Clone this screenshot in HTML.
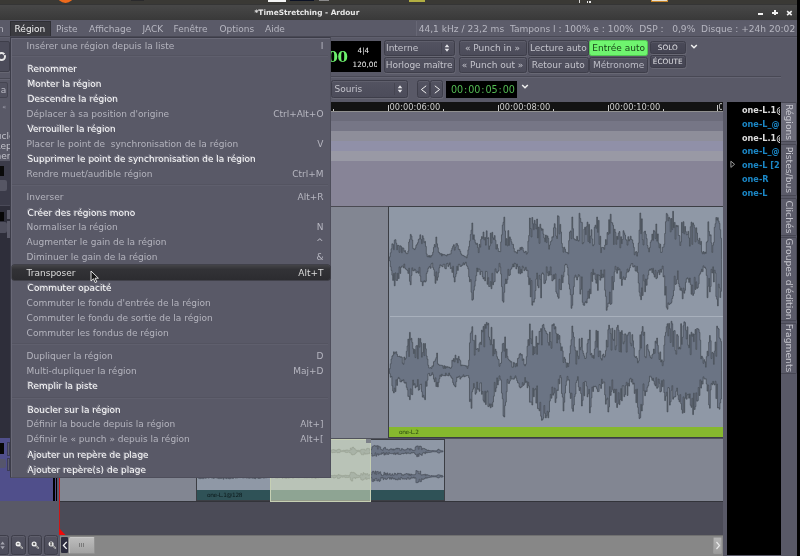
<!DOCTYPE html>
<html><head><meta charset="utf-8"><title>*TimeStretching - Ardour</title>
<style>
*{box-sizing:border-box;margin:0;padding:0}
html,body{width:800px;height:556px;overflow:hidden;background:#595967}
body{position:relative;font-family:"DejaVu Sans","Liberation Sans",sans-serif;font-size:9px;color:#c8c8d0}
.a{position:absolute;white-space:pre}
.btn{position:absolute;border:1px solid #3e3e4a;border-radius:2.5px;background:linear-gradient(#535361,#4c4c5a);color:#c4c4cc;text-align:center;font-size:9px;line-height:13px;box-shadow:inset 0 1px 0 rgba(255,255,255,.07),0.5px 1px 0 rgba(255,255,255,.09);white-space:pre}
.btn.r1{top:40.2px;height:16.3px;line-height:14px}
.btn.r2{top:57px;height:15.5px;line-height:14.5px}
.btn.sm{font-size:7.3px;line-height:11.5px;background:linear-gradient(#4a4a58,#444452);color:#e2e2e6}
.mi{position:absolute;left:26.6px;font-size:9px;line-height:16px;height:16px;white-space:pre;color:#b4b4be}
.mi.d{color:#fff;text-shadow:-1px -1px 0 #858592;margin:0 0 0 1px}
.mi.h,.ac.h{color:#dcdcdc}
.hl{background:linear-gradient(#444448,#323236 30%,#2c2c30);border-radius:2px;box-shadow:0 0 0 0.5px #2a2a2e}
.ac{position:absolute;right:476.5px;font-size:9px;line-height:16px;height:16px;white-space:pre;color:#b6b6c0;text-align:right}
.sep{position:absolute;left:12px;width:316px;height:2px;border-top:1px solid #545461;border-bottom:1px solid #5f5f6d}
.li{position:absolute;left:742px;font-weight:bold;font-size:8.15px;line-height:10px;white-space:pre;color:#1b87c6}
.li.w{color:#dedede}
.tab{position:absolute;left:781px;width:16px;border:1px solid #484854;border-left:none;background:#5b5b69;border-radius:0 2px 2px 0}
.tab span{position:absolute;left:7.6px;top:50%;white-space:pre;font-size:9.2px;line-height:10px;color:#c6c6ce;transform:translate(-50%,-50%) rotate(90deg)}
</style></head><body>
<div id="root" style="position:absolute;left:0;top:0;width:800px;height:556px;will-change:transform">

<!-- desktop panel + title bar -->
<div class="a" style="left:0;top:0;width:800px;height:4px;background:#3a3935"></div>
<div class="a" style="left:57.3px;top:-13.6px;width:17px;height:17px;border-radius:8.5px;background:#ee6a1c"></div>
<div class="a" style="left:131px;top:0;width:13px;height:1px;background:#2a2a2c"></div>
<div class="a" style="left:268px;top:0;width:18px;height:2px;background:#f4f4f4"></div>
<div class="a" style="left:290px;top:0;width:24px;height:1px;background:#0c1224"></div>
<div class="a" style="left:319px;top:0;width:10px;height:1px;background:#8a8a8a"></div>
<div class="a" style="left:409px;top:0;width:16px;height:2px;background:#b2ae42"></div>
<div class="a" style="left:578.5px;top:0;width:1.5px;height:2.5px;background:#d8d8d8"></div>
<div class="a" style="left:586.5px;top:0.5px;width:1.3px;height:2.5px;background:#e8e8e8"></div>
<div class="a" style="left:589.3px;top:0.5px;width:1.3px;height:2.5px;background:#e8e8e8"></div>
<div class="a" style="left:651px;top:0;width:17px;height:2px;background:#e8e0d0;border:1px solid #c8862a;border-top:none"></div>
<div class="a" style="left:0;top:3.5px;width:800px;height:16.5px;background:linear-gradient(#2c2c2c 0,#474747 1.5px,#3a3a3a 15px,#383838)"></div>
<div class="a" style="left:254.5px;top:8px;font-weight:bold;font-size:7.4px;line-height:10px;color:#e6e6e6">*TimeStretching - Ardour</div>
<div class="a" style="left:758px;top:12.8px;width:5.2px;height:1.8px;background:#f2f2f2"></div>
<div class="a" style="left:772.4px;top:11.9px;width:5.2px;height:1.8px;background:#f2f2f2"></div>
<div class="a" style="left:774.1px;top:10.3px;width:1.8px;height:5px;background:#f2f2f2"></div>
<svg class="a" style="left:786px;top:9.5px" width="7" height="7" viewBox="0 0 7 7"><path d="M1.1,1.1 L5.7,5.2 M5.7,1.1 L1.1,5.2" stroke="#f2f2f2" stroke-width="1.6" fill="none"/></svg>

<!-- menubar -->
<div class="a" style="left:0;top:19.8px;width:800px;height:17.2px;background:#5a5a68"></div>
<div class="a" style="left:10px;top:21px;width:41px;height:16px;background:#3b3b40;border:1px solid #2f2f34;border-bottom:none"></div>
<div class="a" style="left:-2px;top:24px;font-size:9px;line-height:11px;color:#b6b6c0">n</div>
<div class="a" style="left:14.5px;top:24px;font-size:9px;line-height:11px;color:#f0f0f0">Région</div>
<div class="a" style="left:56px;top:24px;font-size:9px;line-height:11px;color:#b6b6c0">Piste</div>
<div class="a" style="left:89px;top:24px;font-size:9px;line-height:11px;color:#b6b6c0">Affichage</div>
<div class="a" style="left:142.5px;top:24px;font-size:9px;line-height:11px;color:#b6b6c0">JACK</div>
<div class="a" style="left:173.5px;top:24px;font-size:9px;line-height:11px;color:#b6b6c0">Fenêtre</div>
<div class="a" style="left:219.5px;top:24px;font-size:9px;line-height:11px;color:#b6b6c0">Options</div>
<div class="a" style="left:265px;top:24px;font-size:9px;line-height:11px;color:#b6b6c0">Aide</div>
<div class="a" style="left:415.6px;top:20.5px;width:385px;height:15.3px;background:#5c5c6a;border-left:1px solid #676775"></div>
<div class="a" style="left:418.7px;top:24px;font-size:9.08px;line-height:11px;color:#b6b6c0">44,1 kHz / 23,2 ms  Tampons l : 100% e : 100%  DSP :   0,9%  Disque : +24h 20:02</div>

<!-- toolbar row 1 -->
<div class="a" style="left:0;top:35.8px;width:800px;height:1px;background:#484854"></div>
<div class="a" style="left:0;top:36.8px;width:800px;height:1px;background:#5f5f6d"></div>
<div class="a" style="left:331px;top:41.4px;width:50px;height:30.4px;background:#000"></div>
<div class="a" style="left:327.5px;top:49px;font-family:'DejaVu Serif','Liberation Serif',serif;font-weight:bold;font-size:15px;line-height:16px;color:#6cf06c;letter-spacing:-0.5px">00</div>
<div class="a" style="left:357.5px;top:45.5px;font-size:7.3px;line-height:9px;color:#f0f0f0">4|4</div>
<div class="a" style="left:352.5px;top:59.5px;font-size:7.3px;line-height:9px;color:#f0f0f0;width:24.5px;overflow:hidden">120,00</div>
<div class="btn r1" style="left:383.6px;width:71px;text-align:left;padding-left:1.4px">Interne</div>
<div class="a" style="left:441px;top:43px;width:1px;height:11px;background:#454551"></div>
<svg class="a" style="left:444.2px;top:43.7px" width="6" height="8" viewBox="0 0 6 8"><path d="M3,0.3 L5.3,3.2 L0.7,3.2 Z M3,7.7 L5.3,4.8 L0.7,4.8 Z" fill="#e4e4e8"/></svg>
<div class="btn r2" style="left:383.6px;width:71px;letter-spacing:-0.05px">Horloge maître</div>
<div class="btn r1" style="left:458.5px;width:68px">« Punch in »</div>
<div class="btn r2" style="left:458.5px;width:68px">« Punch out »</div>
<div class="btn r1" style="left:527.8px;width:61px">Lecture auto</div>
<div class="btn r2" style="left:527.8px;width:61px">Retour auto</div>
<div class="btn r1" style="left:589.4px;width:58.5px;background:#6ff56f;border-color:#52c652;color:#1a461a;box-shadow:none">Entrée auto</div>
<div class="btn r2" style="left:589.4px;width:58.5px;color:#bcbcc6">Métronome</div>
<div class="btn sm" style="left:650px;top:40.5px;width:35.5px;height:13.5px">SOLO</div>
<div class="btn sm" style="left:650px;top:54.8px;width:35.5px;height:13.5px">ÉCOUTE</div>
<svg class="a" style="left:690px;top:43.5px" width="8" height="6" viewBox="0 0 8 6"><path d="M1.2,1 L4,3.8 L6.8,1" stroke="#f0f0f0" stroke-width="1.5" fill="none"/></svg>
<div class="a" style="left:331px;top:76px;width:466px;height:2px;border-top:1px solid #484854;border-bottom:1px solid #646472"></div>

<!-- toolbar row 2 -->
<div class="btn" style="left:331px;top:80px;width:77px;height:18px;text-align:left;padding-left:2.5px;line-height:16px">Souris</div>
<div class="a" style="left:394px;top:83px;width:1px;height:12px;background:#454551"></div>
<svg class="a" style="left:397px;top:84.8px" width="6" height="8" viewBox="0 0 6 8"><path d="M3,0.3 L5.3,3.2 L0.7,3.2 Z M3,7.7 L5.3,4.8 L0.7,4.8 Z" fill="#e4e4e8"/></svg>
<div class="btn" style="left:416.8px;top:80px;width:13px;height:18px"></div>
<div class="btn" style="left:430.4px;top:80px;width:13px;height:18px"></div>
<svg class="a" style="left:419.5px;top:84.5px" width="8" height="9" viewBox="0 0 8 9"><path d="M6.2,0.8 L1.4,4.5 L6.2,8.2" stroke="#f0f0f0" stroke-width="1" fill="none"/></svg>
<svg class="a" style="left:433px;top:84.5px" width="8" height="9" viewBox="0 0 8 9"><path d="M1.8,0.8 L6.6,4.5 L1.8,8.2" stroke="#f0f0f0" stroke-width="1" fill="none"/></svg>
<div class="a" style="left:445.5px;top:81px;width:71px;height:16.5px;background:#000"></div>
<div class="a" style="left:451px;top:83.5px;font-size:9.6px;line-height:12px;color:#54bc54">00<span style="margin:0 0.9px">:</span>00<span style="margin:0 0.9px">:</span>05<span style="margin:0 0.9px">:</span>00</div>
<svg class="a" style="left:520.8px;top:83.7px" width="8" height="6" viewBox="0 0 8 6"><path d="M1.2,1 L4,3.8 L6.8,1" stroke="#f0f0f0" stroke-width="1.5" fill="none"/></svg>

<!-- left strip (mostly hidden) -->
<div class="a" style="left:-3px;top:41px;width:13.4px;height:31px;background:#4c4c5a;border:1px solid #3e3e4a;border-radius:2px;box-shadow:0.5px 1px 0 rgba(255,255,255,.08)"></div>
<div class="a" style="left:-3.4px;top:51.6px;width:9.2px;height:9.2px;border:2px solid #e6e6e6;border-radius:50%"></div>
<div class="a" style="left:4px;top:54.2px;width:2px;height:1px;background:#4c4c5a;transform:rotate(-20deg)"></div>
<div class="a" style="left:0;top:77.5px;width:10px;height:2px;border-top:1px solid #484854;border-bottom:1px solid #646472"></div>
<div class="a" style="left:-2px;top:82px;width:10px;height:15.5px;background:#525260;border:1px solid #454551;border-radius:2px"></div>
<div class="a" style="left:0.8px;top:83.5px;font-size:9px;line-height:12px;color:#bcbcc6">a</div>
<div class="a" style="left:2.3px;top:102.5px;font-size:6.5px;line-height:9px;color:#a8a8b4">«</div>

<!-- ruler -->
<div class="a" style="left:60px;top:102px;width:662.6px;height:9.5px;background:#131313"></div>
<div class="a" style="left:60px;top:110.5px;width:662.6px;height:1px;background:#909090"></div>
<div class="a" style="left:389.6px;top:103px;font-size:8.3px;line-height:9px;color:#cccccc">00:00:06:00</div>
<div class="a" style="left:499.6px;top:103px;font-size:8.3px;line-height:9px;color:#cccccc">00:00:08:00</div>
<div class="a" style="left:609.6px;top:103px;font-size:8.3px;line-height:9px;color:#cccccc">00:00:10:00</div>
<div class="a" style="left:718.5px;top:103px;font-size:8px;line-height:9px;color:#cccccc;width:3.5px;overflow:hidden">00</div>
<div class="a" style="left:387.8px;top:104.5px;width:1px;height:6px;background:#c8c8c8"></div>
<div class="a" style="left:497.8px;top:104.5px;width:1px;height:6px;background:#c8c8c8"></div>
<div class="a" style="left:607.8px;top:104.5px;width:1px;height:6px;background:#c8c8c8"></div>
<div class="a" style="left:717px;top:104.5px;width:1px;height:6px;background:#c8c8c8"></div>
<div class="a" style="left:332.8px;top:109px;width:1px;height:1.5px;background:#c8c8c8"></div>
<div class="a" style="left:442.8px;top:109px;width:1px;height:1.5px;background:#c8c8c8"></div>
<div class="a" style="left:552.8px;top:109px;width:1px;height:1.5px;background:#c8c8c8"></div>
<div class="a" style="left:662.8px;top:109px;width:1px;height:1.5px;background:#c8c8c8"></div>

<!-- ruler bands -->
<div class="a" style="left:60px;top:111.5px;width:662.6px;height:9.5px;background:#6b6b7a"></div>
<div class="a" style="left:60px;top:121px;width:662.6px;height:10px;background:#767686"></div>
<div class="a" style="left:60px;top:131px;width:662.6px;height:10px;background:#8e8e9a"></div>
<div class="a" style="left:60px;top:141px;width:662.6px;height:10px;background:#9090a8"></div>
<div class="a" style="left:60px;top:151px;width:662.6px;height:10px;background:#9999a5"></div>
<div class="a" style="left:60px;top:161px;width:662.6px;height:45px;background:#878497"></div>

<!-- track 1 -->
<div class="a" style="left:60px;top:205.5px;width:662.6px;height:233px;background:#828692;border-top:1px solid #4a4a52"></div>
<div class="a" style="left:388px;top:205.5px;width:334.6px;height:232.5px;background:#8f98a6;border:1px solid #3c3e44;border-right:none"></div>
<div class="a" style="left:389.5px;top:316px;width:333px;height:1px;background:#a8b0bc"></div>
<svg class="a" style="left:0;top:0" width="800" height="556" viewBox="0 0 800 556">
<path d="M389.5,259.6V256.8h0.8V252.8h0.8V248.8h0.8V243.8h0.8V244.4h0.8V249.7h0.8V240.2h0.8V239.7h0.8V243.2h0.8V249.8h0.8V245.2h0.8V245.5h0.8V252.4h0.8V245.8h0.8V246.4h0.8V252.8h0.8V247.8h0.8V248.2h0.8V251.4h0.8V250.6h0.8V252.7h0.8V253.6h0.8V253.6h0.8V251.0h0.8V242.0h0.8V239.4h0.8V234.4h0.8V236.0h0.8V240.0h0.8V248.4h0.8V248.9h0.8V249.6h0.8V248.0h0.8V245.4h0.8V244.3h0.8V242.7h0.8V239.5h0.8V238.7h0.8V234.8h0.8V239.2h0.8V243.6h0.8V235.7h0.8V238.3h0.8V242.7h0.8V241.4h0.8V246.4h0.8V253.9h0.8V256.7h0.8V255.7h0.8V257.1h0.8V255.5h0.8V257.2h0.8V255.6h0.8V254.9h0.8V252.3h0.8V247.4h0.8V244.5h0.8V246.9h0.8V237.0h0.8V243.8h0.8V247.7h0.8V252.1h0.8V252.8h0.8V254.2h0.8V253.5h0.8V256.0h0.8V254.0h0.8V254.8h0.8V254.6h0.8V255.1h0.8V255.2h0.8V256.0h0.8V254.4h0.8V254.7h0.8V254.3h0.8V254.0h0.8V253.9h0.8V250.4h0.8V248.2h0.8V246.3h0.8V244.7h0.8V250.1h0.8V247.2h0.8V243.6h0.8V243.7h0.8V245.5h0.8V249.4h0.8V249.3h0.8V251.3h0.8V253.8h0.8V254.9h0.8V255.3h0.8V255.6h0.8V256.1h0.8V256.7h0.8V256.7h0.8V257.9h0.8V254.9h0.8V249.9h0.8V246.6h0.8V240.9h0.8V234.6h0.8V230.2h0.8V223.0h0.8V239.4h0.8V234.8h0.8V239.8h0.8V242.7h0.8V244.3h0.8V243.3h0.8V247.5h0.8V252.6h0.8V244.3h0.8V247.1h0.8V239.4h0.8V236.6h0.8V238.4h0.8V232.0h0.8V239.9h0.8V237.4h0.8V245.1h0.8V230.8h0.8V238.5h0.8V237.7h0.8V249.4h0.8V245.9h0.8V233.1h0.8V243.2h0.8V232.3h0.8V237.8h0.8V239.5h0.8V235.6h0.8V240.2h0.8V249.1h0.8V244.5h0.8V248.4h0.8V251.3h0.8V251.5h0.8V251.7h0.8V241.9h0.8V234.8h0.8V225.1h0.8V222.3h0.8V217.1h0.8V230.9h0.8V245.1h0.8V238.6h0.8V245.9h0.8V230.6h0.8V245.4h0.8V236.9h0.8V239.0h0.8V241.8h0.8V244.3h0.8V244.3h0.8V248.4h0.8V251.9h0.8V251.7h0.8V252.3h0.8V253.4h0.8V250.0h0.8V250.2h0.8V250.6h0.8V247.6h0.8V249.6h0.8V247.1h0.8V247.9h0.8V250.8h0.8V252.6h0.8V252.1h0.8V251.2h0.8V254.1h0.8V252.8h0.8V241.2h0.8V235.5h0.8V218.0h0.8V228.5h0.8V237.0h0.8V217.5h0.8V223.7h0.8V229.7h0.8V220.3h0.8V224.2h0.8V229.0h0.8V219.0h0.8V237.9h0.8V227.1h0.8V243.4h0.8V224.2h0.8V228.1h0.8V230.4h0.8V228.9h0.8V234.1h0.8V238.0h0.8V241.7h0.8V235.0h0.8V242.6h0.8V235.9h0.8V238.3h0.8V249.2h0.8V245.0h0.8V241.7h0.8V240.8h0.8V236.8h0.8V237.1h0.8V227.8h0.8V223.7h0.8V227.9h0.8V236.0h0.8V238.5h0.8V215.7h0.8V216.5h0.8V233.9h0.8V224.4h0.8V232.0h0.8V243.4h0.8V247.3h0.8V252.2h0.8V247.2h0.8V249.2h0.8V252.2h0.8V252.4h0.8V252.6h0.8V253.9h0.8V240.6h0.8V232.1h0.8V230.9h0.8V238.7h0.8V217.0h0.8V228.7h0.8V238.5h0.8V239.7h0.8V239.6h0.8V240.5h0.8V236.3h0.8V240.3h0.8V241.1h0.8V213.2h0.8V218.4h0.8V222.3h0.8V222.4h0.8V243.8h0.8V242.6h0.8V229.1h0.8V227.2h0.8V234.6h0.8V226.7h0.8V222.1h0.8V241.5h0.8V224.4h0.8V243.0h0.8V236.0h0.8V229.7h0.8V238.9h0.8V245.8h0.8V244.7h0.8V227.2h0.8V225.2h0.8V228.3h0.8V217.0h0.8V232.3h0.8V220.4h0.8V244.4h0.8V236.2h0.8V252.6h0.8V247.4h0.8V247.5h0.8V247.6h0.8V249.3h0.8V245.1h0.8V239.6h0.8V244.6h0.8V232.5h0.8V234.4h0.8V219.7h0.8V233.4h0.8V214.2h0.8V222.6h0.8V222.8h0.8V225.2h0.8V244.5h0.8V229.2h0.8V232.4h0.8V244.3h0.8V236.3h0.8V239.4h0.8V233.2h0.8V231.5h0.8V247.8h0.8V236.7h0.8V243.6h0.8V239.5h0.8V230.7h0.8V232.9h0.8V235.0h0.8V239.4h0.8V240.3h0.8V245.1h0.8V236.7h0.8V241.0h0.8V239.5h0.8V236.2h0.8V239.5h0.8V239.9h0.8V243.2h0.8V247.3h0.8V254.8h0.8V252.1h0.8V251.6h0.8V256.1h0.8V252.4h0.8V243.1h0.8V230.1h0.8V213.0h0.8V233.6h0.8V218.8h0.8V239.6h0.8V245.0h0.8V231.8h0.8V231.1h0.8V234.2h0.8V238.6h0.8V245.5h0.8V248.3h0.8V251.9h0.8V247.6h0.8V242.1h0.8V240.2h0.8V234.1h0.8V240.3h0.8V230.4h0.8V231.6h0.8V238.6h0.8V224.0h0.8V241.1h0.8V233.9h0.8V243.0h0.8V247.8h0.8V244.2h0.8V252.5h0.8V252.1h0.8V247.2h0.8V247.2h0.8V244.1h0.8V233.5h0.8V221.7h0.8V213.4h0.8V214.8h0.8V220.8h0.8V217.3h0.8V218.5h0.8V231.9h0.8V218.5h0.8V229.6h0.8V211.3h0.8V227.6h0.8V222.4h0.8V239.2h0.8V225.3h0.8V226.6h0.8V225.6h0.8V235.4h0.8V235.6h0.8V245.5h0.8V241.8h0.8V222.4h0.8V232.6h0.8V221.7h0.8V233.8h0.8V226.5h0.8V231.6h0.8V234.8h0.8V234.4h0.8V231.4h0.8V237.9h0.8V246.1h0.8V226.7h0.8V222.1h0.8V244.4h0.8V222.9h0.8V224.9h0.8V227.7h0.8V241.9h0.8V227.8h0.8V233.0h0.8V240.0h0.8V243.4h0.8V238.2h0.8V244.4h0.8V241.4h0.8V251.9h0.8V253.8h0.8V251.5h0.8V253.9h0.8V252.0h0.8V253.4h0.8V242.3h0.8V241.1h0.8V221.8h0.8V231.5h0.8V235.7h0.8V234.8h0.8V242.9h0.8V252.4h0.8V245.1h0.8V242.4h0.8V227.3h0.8V223.7h0.8V217.5h0.8V220.1h0.8V217.7h0.8V221.1h0.8V223.3h0.8V229.7h0.8V238.2h0.8V259.6V291.3h-0.8V297.5h-0.8V287.8h-0.8V284.1h-0.8V305.9h-0.8V299.2h-0.8V296.6h-0.8V273.0h-0.8V270.2h-0.8V282.0h-0.8V266.8h-0.8V273.0h-0.8V269.3h-0.8V286.5h-0.8V291.9h-0.8V278.4h-0.8V286.3h-0.8V297.7h-0.8V275.4h-0.8V268.8h-0.8V267.2h-0.8V267.6h-0.8V265.8h-0.8V271.6h-0.8V269.2h-0.8V271.7h-0.8V273.4h-0.8V275.0h-0.8V283.8h-0.8V287.6h-0.8V288.4h-0.8V281.9h-0.8V289.5h-0.8V277.3h-0.8V293.6h-0.8V295.4h-0.8V285.0h-0.8V294.2h-0.8V284.4h-0.8V278.0h-0.8V282.4h-0.8V279.2h-0.8V277.8h-0.8V278.8h-0.8V282.4h-0.8V290.3h-0.8V293.2h-0.8V288.1h-0.8V298.8h-0.8V290.7h-0.8V288.1h-0.8V290.2h-0.8V286.5h-0.8V283.6h-0.8V270.8h-0.8V279.5h-0.8V283.8h-0.8V284.4h-0.8V276.1h-0.8V290.5h-0.8V296.0h-0.8V298.5h-0.8V302.4h-0.8V303.6h-0.8V304.0h-0.8V304.6h-0.8V302.8h-0.8V309.2h-0.8V307.3h-0.8V286.5h-0.8V295.2h-0.8V275.8h-0.8V276.9h-0.8V266.0h-0.8V269.2h-0.8V272.3h-0.8V269.4h-0.8V274.6h-0.8V270.5h-0.8V272.5h-0.8V277.8h-0.8V278.7h-0.8V270.3h-0.8V277.1h-0.8V274.2h-0.8V268.3h-0.8V272.7h-0.8V268.6h-0.8V270.2h-0.8V269.2h-0.8V270.5h-0.8V275.0h-0.8V279.1h-0.8V285.3h-0.8V279.0h-0.8V291.8h-0.8V281.1h-0.8V274.8h-0.8V295.5h-0.8V287.8h-0.8V299.7h-0.8V296.2h-0.8V292.2h-0.8V283.0h-0.8V272.5h-0.8V266.4h-0.8V271.2h-0.8V270.8h-0.8V265.6h-0.8V267.0h-0.8V266.9h-0.8V263.5h-0.8V263.7h-0.8V265.4h-0.8V267.9h-0.8V270.6h-0.8V272.0h-0.8V269.0h-0.8V272.8h-0.8V277.5h-0.8V279.6h-0.8V279.1h-0.8V276.8h-0.8V279.5h-0.8V285.4h-0.8V271.7h-0.8V278.7h-0.8V268.9h-0.8V270.1h-0.8V267.4h-0.8V273.3h-0.8V269.9h-0.8V266.3h-0.8V271.8h-0.8V281.8h-0.8V289.8h-0.8V276.5h-0.8V303.6h-0.8V304.4h-0.8V292.0h-0.8V303.5h-0.8V303.0h-0.8V307.0h-0.8V310.3h-0.8V296.4h-0.8V290.2h-0.8V269.8h-0.8V277.2h-0.8V274.1h-0.8V278.0h-0.8V270.0h-0.8V280.2h-0.8V275.5h-0.8V274.9h-0.8V290.4h-0.8V274.5h-0.8V283.2h-0.8V279.4h-0.8V273.1h-0.8V274.7h-0.8V269.3h-0.8V281.4h-0.8V272.6h-0.8V293.8h-0.8V289.1h-0.8V298.3h-0.8V291.1h-0.8V298.7h-0.8V303.0h-0.8V301.4h-0.8V302.6h-0.8V305.3h-0.8V305.0h-0.8V302.3h-0.8V276.9h-0.8V289.4h-0.8V294.1h-0.8V275.8h-0.8V274.6h-0.8V277.1h-0.8V280.0h-0.8V277.2h-0.8V275.1h-0.8V277.3h-0.8V286.7h-0.8V294.4h-0.8V305.3h-0.8V308.3h-0.8V294.7h-0.8V289.1h-0.8V284.2h-0.8V275.2h-0.8V267.4h-0.8V264.6h-0.8V264.0h-0.8V265.1h-0.8V271.8h-0.8V276.7h-0.8V282.7h-0.8V275.1h-0.8V289.7h-0.8V289.4h-0.8V279.2h-0.8V298.3h-0.8V296.6h-0.8V293.6h-0.8V292.0h-0.8V273.9h-0.8V279.0h-0.8V274.7h-0.8V279.9h-0.8V280.9h-0.8V274.7h-0.8V266.9h-0.8V275.2h-0.8V271.4h-0.8V275.8h-0.8V272.8h-0.8V266.8h-0.8V280.3h-0.8V283.1h-0.8V283.6h-0.8V274.3h-0.8V272.9h-0.8V274.0h-0.8V297.9h-0.8V279.4h-0.8V275.3h-0.8V287.8h-0.8V285.7h-0.8V273.0h-0.8V279.1h-0.8V290.5h-0.8V299.0h-0.8V302.2h-0.8V301.5h-0.8V305.2h-0.8V280.5h-0.8V296.9h-0.8V278.3h-0.8V284.7h-0.8V276.9h-0.8V270.2h-0.8V270.6h-0.8V267.3h-0.8V269.5h-0.8V270.7h-0.8V267.7h-0.8V266.1h-0.8V273.0h-0.8V269.3h-0.8V273.9h-0.8V266.6h-0.8V273.2h-0.8V266.7h-0.8V264.1h-0.8V268.9h-0.8V263.9h-0.8V263.2h-0.8V267.0h-0.8V264.1h-0.8V266.9h-0.8V268.6h-0.8V269.6h-0.8V275.0h-0.8V275.6h-0.8V269.3h-0.8V279.6h-0.8V283.5h-0.8V279.0h-0.8V283.9h-0.8V292.3h-0.8V302.2h-0.8V300.7h-0.8V286.6h-0.8V274.1h-0.8V267.1h-0.8V263.3h-0.8V270.7h-0.8V271.7h-0.8V273.1h-0.8V271.8h-0.8V268.8h-0.8V281.6h-0.8V282.0h-0.8V284.8h-0.8V273.3h-0.8V288.7h-0.8V281.6h-0.8V286.5h-0.8V286.5h-0.8V277.7h-0.8V284.3h-0.8V271.5h-0.8V271.3h-0.8V280.9h-0.8V277.6h-0.8V279.0h-0.8V276.8h-0.8V271.3h-0.8V271.5h-0.8V274.6h-0.8V269.2h-0.8V268.8h-0.8V271.8h-0.8V268.0h-0.8V275.7h-0.8V280.9h-0.8V286.2h-0.8V290.2h-0.8V299.3h-0.8V300.2h-0.8V292.2h-0.8V279.5h-0.8V281.8h-0.8V276.9h-0.8V268.9h-0.8V266.6h-0.8V265.4h-0.8V262.2h-0.8V263.3h-0.8V264.8h-0.8V262.8h-0.8V265.2h-0.8V265.4h-0.8V266.4h-0.8V266.4h-0.8V264.4h-0.8V264.3h-0.8V270.4h-0.8V266.4h-0.8V273.8h-0.8V276.6h-0.8V282.0h-0.8V277.2h-0.8V266.3h-0.8V272.4h-0.8V267.8h-0.8V268.6h-0.8V262.8h-0.8V265.1h-0.8V266.6h-0.8V263.3h-0.8V263.9h-0.8V268.9h-0.8V268.3h-0.8V264.3h-0.8V264.3h-0.8V266.7h-0.8V266.1h-0.8V265.6h-0.8V264.8h-0.8V267.7h-0.8V272.8h-0.8V277.2h-0.8V280.3h-0.8V271.9h-0.8V283.3h-0.8V275.8h-0.8V269.6h-0.8V267.7h-0.8V263.1h-0.8V263.8h-0.8V268.3h-0.8V266.4h-0.8V267.2h-0.8V268.4h-0.8V271.6h-0.8V273.5h-0.8V281.3h-0.8V282.1h-0.8V280.7h-0.8V281.9h-0.8V285.7h-0.8V281.3h-0.8V281.6h-0.8V276.0h-0.8V267.3h-0.8V273.3h-0.8V271.3h-0.8V272.3h-0.8V272.8h-0.8V270.1h-0.8V269.2h-0.8V270.9h-0.8V270.7h-0.8V267.8h-0.8V275.4h-0.8V284.8h-0.8V281.3h-0.8V268.2h-0.8V273.4h-0.8V270.6h-0.8V269.7h-0.8V269.1h-0.8V268.2h-0.8V264.0h-0.8V267.8h-0.8V266.1h-0.8V266.2h-0.8V267.4h-0.8V273.4h-0.8V266.9h-0.8V278.6h-0.8V273.2h-0.8V280.5h-0.8V280.2h-0.8V272.9h-0.8V285.8h-0.8V273.5h-0.8V280.4h-0.8V275.1h-0.8V270.4h-0.8V266.7h-0.8V260.9h-0.8V259.6Z" fill="#6b7484" stroke="#40464e" stroke-width="0.65" stroke-linejoin="round"/>
<path d="M389.5,370.8V368.6h0.8V363.8h0.8V359.0h0.8V356.1h0.8V355.2h0.8V351.8h0.8V353.8h0.8V352.2h0.8V351.8h0.8V354.4h0.8V356.5h0.8V356.5h0.8V356.2h0.8V357.1h0.8V356.8h0.8V357.3h0.8V363.1h0.8V364.3h0.8V357.0h0.8V359.6h0.8V358.3h0.8V351.3h0.8V346.0h0.8V339.1h0.8V356.5h0.8V332.4h0.8V339.9h0.8V338.3h0.8V342.4h0.8V348.7h0.8V353.5h0.8V349.4h0.8V357.6h0.8V345.9h0.8V345.5h0.8V358.8h0.8V338.3h0.8V347.2h0.8V338.6h0.8V342.7h0.8V357.2h0.8V352.6h0.8V343.6h0.8V355.6h0.8V343.5h0.8V348.8h0.8V356.0h0.8V359.1h0.8V365.3h0.8V367.9h0.8V367.9h0.8V367.6h0.8V368.3h0.8V365.9h0.8V366.1h0.8V361.7h0.8V361.4h0.8V359.7h0.8V357.7h0.8V353.0h0.8V363.8h0.8V364.5h0.8V365.3h0.8V365.2h0.8V365.3h0.8V365.3h0.8V365.8h0.8V368.3h0.8V365.7h0.8V368.5h0.8V366.3h0.8V367.7h0.8V366.7h0.8V367.2h0.8V367.0h0.8V367.9h0.8V368.3h0.8V367.0h0.8V360.2h0.8V361.2h0.8V358.5h0.8V361.9h0.8V355.1h0.8V359.2h0.8V358.5h0.8V362.9h0.8V356.4h0.8V359.5h0.8V360.7h0.8V365.7h0.8V364.9h0.8V365.4h0.8V365.3h0.8V365.4h0.8V365.6h0.8V366.1h0.8V365.9h0.8V368.4h0.8V365.7h0.8V360.2h0.8V342.8h0.8V333.5h0.8V331.8h0.8V326.7h0.8V340.4h0.8V340.4h0.8V355.1h0.8V335.2h0.8V349.5h0.8V348.8h0.8V348.5h0.8V351.4h0.8V343.7h0.8V342.2h0.8V344.5h0.8V330.1h0.8V331.8h0.8V326.4h0.8V346.9h0.8V324.3h0.8V328.3h0.8V322.4h0.8V324.9h0.8V323.3h0.8V337.1h0.8V339.7h0.8V344.8h0.8V327.3h0.8V344.7h0.8V355.8h0.8V339.4h0.8V353.8h0.8V349.2h0.8V351.6h0.8V356.7h0.8V358.9h0.8V359.6h0.8V366.3h0.8V363.5h0.8V363.0h0.8V352.2h0.8V343.8h0.8V343.3h0.8V351.1h0.8V336.9h0.8V357.6h0.8V348.9h0.8V356.4h0.8V359.0h0.8V360.0h0.8V360.6h0.8V362.0h0.8V361.7h0.8V367.2h0.8V367.1h0.8V362.4h0.8V363.6h0.8V366.8h0.8V363.3h0.8V366.2h0.8V358.5h0.8V357.9h0.8V354.4h0.8V353.4h0.8V355.2h0.8V354.5h0.8V360.4h0.8V358.9h0.8V364.6h0.8V365.9h0.8V364.2h0.8V356.7h0.8V346.3h0.8V339.6h0.8V345.4h0.8V323.9h0.8V338.6h0.8V343.6h0.8V330.7h0.8V355.0h0.8V346.4h0.8V353.5h0.8V347.0h0.8V336.4h0.8V354.4h0.8V343.0h0.8V344.3h0.8V331.3h0.8V331.4h0.8V328.6h0.8V345.0h0.8V325.3h0.8V324.4h0.8V328.0h0.8V330.4h0.8V331.4h0.8V333.6h0.8V334.0h0.8V342.6h0.8V345.3h0.8V332.1h0.8V341.5h0.8V348.3h0.8V324.7h0.8V325.6h0.8V323.8h0.8V329.0h0.8V326.7h0.8V333.4h0.8V343.0h0.8V334.0h0.8V339.3h0.8V335.5h0.8V343.4h0.8V350.5h0.8V346.8h0.8V350.9h0.8V362.5h0.8V357.3h0.8V359.0h0.8V362.6h0.8V367.3h0.8V363.0h0.8V366.6h0.8V363.1h0.8V353.6h0.8V345.7h0.8V339.7h0.8V326.0h0.8V332.4h0.8V337.0h0.8V346.9h0.8V350.4h0.8V364.1h0.8V350.8h0.8V355.9h0.8V358.8h0.8V338.8h0.8V349.7h0.8V347.2h0.8V338.0h0.8V350.8h0.8V353.5h0.8V355.9h0.8V358.5h0.8V358.1h0.8V352.9h0.8V343.6h0.8V339.4h0.8V339.9h0.8V330.0h0.8V354.8h0.8V353.4h0.8V357.4h0.8V355.3h0.8V358.4h0.8V349.1h0.8V341.3h0.8V330.4h0.8V347.3h0.8V331.1h0.8V356.6h0.8V350.9h0.8V351.0h0.8V358.5h0.8V360.2h0.8V355.1h0.8V354.0h0.8V357.1h0.8V356.0h0.8V350.6h0.8V340.2h0.8V347.0h0.8V329.6h0.8V325.1h0.8V328.6h0.8V333.5h0.8V350.2h0.8V328.2h0.8V339.2h0.8V340.5h0.8V330.3h0.8V349.8h0.8V345.7h0.8V327.4h0.8V325.3h0.8V330.2h0.8V351.6h0.8V332.1h0.8V352.2h0.8V330.6h0.8V334.1h0.8V343.8h0.8V341.7h0.8V333.8h0.8V334.7h0.8V352.1h0.8V335.6h0.8V333.8h0.8V332.4h0.8V332.3h0.8V343.2h0.8V345.8h0.8V334.6h0.8V340.8h0.8V347.8h0.8V356.1h0.8V357.5h0.8V356.5h0.8V358.3h0.8V362.9h0.8V361.0h0.8V350.3h0.8V334.8h0.8V348.1h0.8V331.7h0.8V326.5h0.8V335.3h0.8V332.1h0.8V356.6h0.8V357.7h0.8V345.6h0.8V344.5h0.8V349.8h0.8V351.7h0.8V355.7h0.8V357.5h0.8V358.4h0.8V354.8h0.8V353.9h0.8V349.0h0.8V353.4h0.8V341.1h0.8V343.2h0.8V338.0h0.8V345.4h0.8V353.2h0.8V359.5h0.8V351.9h0.8V362.0h0.8V359.8h0.8V365.7h0.8V361.4h0.8V345.0h0.8V335.9h0.8V332.3h0.8V326.7h0.8V323.8h0.8V335.9h0.8V323.4h0.8V328.6h0.8V342.5h0.8V321.3h0.8V323.8h0.8V346.5h0.8V331.0h0.8V330.6h0.8V350.6h0.8V354.2h0.8V334.5h0.8V335.8h0.8V349.0h0.8V347.1h0.8V349.0h0.8V323.7h0.8V344.4h0.8V337.3h0.8V325.7h0.8V321.8h0.8V322.6h0.8V330.2h0.8V339.0h0.8V326.8h0.8V345.2h0.8V347.7h0.8V334.7h0.8V354.7h0.8V332.2h0.8V336.3h0.8V333.8h0.8V341.6h0.8V334.4h0.8V329.5h0.8V349.4h0.8V328.5h0.8V328.7h0.8V329.6h0.8V332.4h0.8V340.2h0.8V358.8h0.8V356.1h0.8V357.7h0.8V363.4h0.8V359.7h0.8V361.7h0.8V367.1h0.8V356.7h0.8V351.2h0.8V355.6h0.8V342.2h0.8V335.5h0.8V340.7h0.8V358.6h0.8V352.3h0.8V353.2h0.8V364.3h0.8V351.2h0.8V342.0h0.8V356.3h0.8V326.1h0.8V328.0h0.8V328.9h0.8V337.9h0.8V338.9h0.8V341.4h0.8V370.8V399.0h-0.8V402.9h-0.8V409.2h-0.8V407.5h-0.8V407.9h-0.8V384.1h-0.8V398.6h-0.8V381.2h-0.8V385.0h-0.8V383.8h-0.8V381.4h-0.8V384.8h-0.8V383.4h-0.8V389.9h-0.8V408.2h-0.8V404.9h-0.8V385.1h-0.8V391.1h-0.8V384.0h-0.8V378.8h-0.8V379.1h-0.8V378.8h-0.8V376.8h-0.8V384.1h-0.8V381.0h-0.8V388.1h-0.8V379.8h-0.8V395.5h-0.8V387.5h-0.8V400.6h-0.8V401.2h-0.8V392.8h-0.8V406.6h-0.8V409.5h-0.8V393.2h-0.8V414.6h-0.8V398.3h-0.8V407.3h-0.8V405.3h-0.8V393.8h-0.8V398.2h-0.8V394.2h-0.8V394.9h-0.8V399.2h-0.8V392.8h-0.8V398.3h-0.8V412.5h-0.8V396.9h-0.8V413.2h-0.8V409.6h-0.8V403.6h-0.8V394.6h-0.8V401.8h-0.8V399.4h-0.8V395.1h-0.8V388.0h-0.8V391.2h-0.8V396.6h-0.8V397.1h-0.8V397.0h-0.8V399.2h-0.8V385.7h-0.8V390.3h-0.8V401.7h-0.8V405.1h-0.8V388.1h-0.8V387.5h-0.8V411.9h-0.8V392.2h-0.8V396.2h-0.8V400.6h-0.8V392.5h-0.8V379.8h-0.8V386.7h-0.8V380.6h-0.8V391.3h-0.8V392.0h-0.8V383.3h-0.8V379.0h-0.8V387.3h-0.8V388.3h-0.8V377.7h-0.8V385.9h-0.8V384.2h-0.8V381.1h-0.8V378.3h-0.8V380.3h-0.8V377.9h-0.8V376.3h-0.8V376.2h-0.8V381.8h-0.8V385.6h-0.8V387.3h-0.8V391.6h-0.8V390.8h-0.8V395.7h-0.8V391.0h-0.8V383.9h-0.8V405.1h-0.8V411.0h-0.8V404.4h-0.8V417.6h-0.8V418.6h-0.8V413.4h-0.8V407.3h-0.8V389.1h-0.8V402.7h-0.8V389.8h-0.8V393.4h-0.8V383.0h-0.8V384.2h-0.8V379.4h-0.8V382.1h-0.8V378.2h-0.8V379.2h-0.8V386.1h-0.8V383.3h-0.8V395.5h-0.8V382.3h-0.8V385.5h-0.8V394.6h-0.8V396.7h-0.8V385.9h-0.8V385.7h-0.8V400.8h-0.8V388.6h-0.8V399.6h-0.8V404.6h-0.8V392.6h-0.8V403.7h-0.8V407.5h-0.8V389.3h-0.8V402.4h-0.8V389.2h-0.8V392.9h-0.8V389.8h-0.8V379.9h-0.8V391.4h-0.8V395.4h-0.8V386.6h-0.8V406.9h-0.8V412.0h-0.8V398.0h-0.8V399.9h-0.8V404.2h-0.8V394.9h-0.8V382.0h-0.8V382.0h-0.8V383.6h-0.8V379.2h-0.8V388.4h-0.8V385.2h-0.8V384.5h-0.8V391.5h-0.8V391.6h-0.8V389.1h-0.8V387.2h-0.8V386.2h-0.8V386.8h-0.8V386.2h-0.8V391.5h-0.8V387.0h-0.8V397.8h-0.8V407.1h-0.8V412.9h-0.8V389.4h-0.8V393.8h-0.8V396.9h-0.8V386.0h-0.8V381.7h-0.8V381.3h-0.8V395.8h-0.8V382.5h-0.8V400.4h-0.8V406.0h-0.8V393.5h-0.8V387.6h-0.8V390.6h-0.8V386.8h-0.8V376.6h-0.8V380.4h-0.8V382.5h-0.8V394.0h-0.8V396.5h-0.8V405.0h-0.8V411.3h-0.8V408.6h-0.8V393.2h-0.8V398.4h-0.8V392.8h-0.8V379.9h-0.8V380.1h-0.8V376.4h-0.8V381.1h-0.8V385.4h-0.8V393.1h-0.8V402.2h-0.8V411.0h-0.8V397.1h-0.8V393.5h-0.8V377.7h-0.8V375.5h-0.8V383.8h-0.8V379.3h-0.8V390.5h-0.8V389.9h-0.8V398.2h-0.8V402.6h-0.8V388.0h-0.8V393.2h-0.8V395.2h-0.8V387.0h-0.8V398.2h-0.8V394.4h-0.8V401.1h-0.8V412.0h-0.8V417.8h-0.8V411.2h-0.8V415.6h-0.8V417.9h-0.8V413.4h-0.8V405.5h-0.8V418.0h-0.8V419.5h-0.8V420.3h-0.8V416.2h-0.8V402.3h-0.8V410.8h-0.8V408.7h-0.8V408.6h-0.8V385.9h-0.8V403.1h-0.8V388.7h-0.8V389.8h-0.8V396.8h-0.8V388.2h-0.8V405.0h-0.8V402.1h-0.8V402.1h-0.8V402.2h-0.8V386.1h-0.8V382.3h-0.8V387.8h-0.8V381.2h-0.8V382.6h-0.8V377.5h-0.8V384.3h-0.8V385.4h-0.8V382.6h-0.8V386.7h-0.8V387.2h-0.8V387.9h-0.8V386.6h-0.8V383.1h-0.8V382.8h-0.8V380.6h-0.8V378.2h-0.8V375.9h-0.8V377.9h-0.8V379.2h-0.8V378.8h-0.8V379.0h-0.8V379.1h-0.8V376.2h-0.8V381.1h-0.8V383.4h-0.8V383.3h-0.8V379.4h-0.8V391.7h-0.8V402.1h-0.8V405.6h-0.8V417.0h-0.8V415.9h-0.8V398.8h-0.8V393.1h-0.8V380.3h-0.8V379.1h-0.8V375.9h-0.8V380.8h-0.8V384.9h-0.8V377.9h-0.8V387.9h-0.8V391.7h-0.8V382.4h-0.8V396.2h-0.8V402.1h-0.8V406.7h-0.8V404.1h-0.8V407.8h-0.8V403.8h-0.8V406.2h-0.8V406.6h-0.8V390.9h-0.8V392.3h-0.8V404.6h-0.8V391.2h-0.8V402.2h-0.8V400.4h-0.8V391.4h-0.8V394.3h-0.8V382.8h-0.8V383.0h-0.8V391.3h-0.8V388.8h-0.8V389.3h-0.8V382.0h-0.8V392.6h-0.8V394.2h-0.8V387.6h-0.8V383.5h-0.8V389.2h-0.8V391.7h-0.8V408.3h-0.8V399.2h-0.8V401.6h-0.8V377.9h-0.8V375.7h-0.8V375.6h-0.8V375.7h-0.8V376.1h-0.8V376.3h-0.8V376.8h-0.8V374.8h-0.8V376.7h-0.8V376.8h-0.8V377.5h-0.8V379.1h-0.8V376.0h-0.8V376.6h-0.8V377.6h-0.8V377.0h-0.8V381.6h-0.8V386.9h-0.8V385.8h-0.8V384.7h-0.8V382.7h-0.8V378.4h-0.8V377.8h-0.8V376.2h-0.8V375.3h-0.8V373.0h-0.8V375.9h-0.8V375.2h-0.8V375.3h-0.8V373.1h-0.8V376.0h-0.8V375.5h-0.8V375.6h-0.8V375.6h-0.8V374.2h-0.8V376.6h-0.8V375.1h-0.8V378.7h-0.8V382.5h-0.8V386.9h-0.8V382.3h-0.8V386.5h-0.8V377.9h-0.8V381.8h-0.8V379.1h-0.8V374.7h-0.8V372.7h-0.8V374.9h-0.8V375.7h-0.8V375.8h-0.8V373.4h-0.8V373.8h-0.8V380.2h-0.8V386.3h-0.8V381.6h-0.8V399.7h-0.8V397.9h-0.8V395.3h-0.8V397.1h-0.8V391.7h-0.8V384.1h-0.8V384.5h-0.8V389.4h-0.8V390.2h-0.8V379.5h-0.8V386.6h-0.8V386.1h-0.8V387.9h-0.8V383.6h-0.8V385.2h-0.8V380.0h-0.8V394.7h-0.8V394.2h-0.8V388.9h-0.8V399.7h-0.8V396.2h-0.8V396.4h-0.8V389.7h-0.8V387.3h-0.8V382.4h-0.8V383.3h-0.8V382.5h-0.8V379.7h-0.8V380.9h-0.8V380.2h-0.8V382.0h-0.8V381.7h-0.8V378.6h-0.8V377.4h-0.8V379.0h-0.8V385.4h-0.8V379.8h-0.8V391.6h-0.8V388.1h-0.8V392.9h-0.8V391.1h-0.8V385.8h-0.8V376.4h-0.8V377.2h-0.8V373.6h-0.8V370.8Z" fill="#6b7484" stroke="#40464e" stroke-width="0.65" stroke-linejoin="round"/>
</svg>
<div class="a" style="left:389px;top:426.8px;width:333.6px;height:10.5px;background:#86b82e"></div>
<div class="a" style="left:399px;top:428.3px;font-size:5.8px;line-height:9px;color:#2c4a10;letter-spacing:-0.3px">one-L.2</div>

<!-- track 2 -->
<div class="a" style="left:60px;top:438px;width:662.6px;height:63.5px;background:#828692;border-top:1px solid #50525c;border-bottom:1px solid #33343a"></div>
<div class="a" style="left:196px;top:438.5px;width:248.5px;height:62.5px;background:#8f98a6;border:1px solid #3c3e44"></div>
<div class="a" style="left:197px;top:490px;width:246.5px;height:10px;background:#2f5257"></div>
<div class="a" style="left:207px;top:490.8px;font-size:5.8px;line-height:9px;color:#0c1a1c;letter-spacing:-0.3px">one-L.1@128</div>
<svg class="a" style="left:0;top:0" width="800" height="556" viewBox="0 0 800 556">
<path d="M197.5,451.2V450.0h0.8V449.4h0.8V450.2h0.8V450.3h0.8V448.8h0.8V449.0h0.8V449.2h0.8V448.8h0.8V448.9h0.8V449.1h0.8V449.4h0.8V450.6h0.8V449.3h0.8V449.5h0.8V450.3h0.8V450.4h0.8V450.5h0.8V449.6h0.8V449.8h0.8V449.3h0.8V449.5h0.8V450.2h0.8V450.0h0.8V449.5h0.8V450.5h0.8V449.9h0.8V449.1h0.8V450.2h0.8V450.4h0.8V448.6h0.8V449.0h0.8V449.7h0.8V449.7h0.8V449.0h0.8V448.5h0.8V448.6h0.8V450.0h0.8V449.0h0.8V450.2h0.8V450.1h0.8V448.9h0.8V449.2h0.8V448.9h0.8V449.2h0.8V450.5h0.8V449.7h0.8V449.3h0.8V449.5h0.8V449.4h0.8V449.7h0.8V449.7h0.8V449.8h0.8V449.8h0.8V450.6h0.8V450.5h0.8V450.1h0.8V449.9h0.8V449.8h0.8V450.6h0.8V450.4h0.8V449.5h0.8V449.8h0.8V450.5h0.8V450.6h0.8V449.7h0.8V449.9h0.8V450.5h0.8V449.5h0.8V450.4h0.8V449.0h0.8V449.4h0.8V449.0h0.8V448.8h0.8V450.3h0.8V450.1h0.8V449.4h0.8V450.1h0.8V449.5h0.8V450.1h0.8V450.1h0.8V450.4h0.8V449.6h0.8V449.7h0.8V449.5h0.8V449.7h0.8V450.2h0.8V450.5h0.8V450.3h0.8V449.8h0.8V450.1h0.8V450.1h0.8V450.4h0.8V450.8h0.8V449.9h0.8V449.9h0.8V449.7h0.8V450.6h0.8V449.7h0.8V450.4h0.8V449.7h0.8V450.3h0.8V449.6h0.8V450.2h0.8V450.6h0.8V449.4h0.8V449.6h0.8V449.3h0.8V449.3h0.8V449.2h0.8V449.9h0.8V449.5h0.8V450.1h0.8V449.3h0.8V449.6h0.8V450.3h0.8V449.4h0.8V450.1h0.8V449.8h0.8V449.8h0.8V450.1h0.8V450.5h0.8V450.0h0.8V450.0h0.8V450.0h0.8V450.0h0.8V449.9h0.8V450.6h0.8V450.1h0.8V450.5h0.8V450.8h0.8V450.5h0.8V450.6h0.8V450.1h0.8V449.9h0.8V450.3h0.8V450.3h0.8V449.5h0.8V450.3h0.8V449.9h0.8V450.2h0.8V449.6h0.8V450.0h0.8V449.3h0.8V449.3h0.8V449.5h0.8V450.6h0.8V449.6h0.8V449.5h0.8V449.6h0.8V450.6h0.8V450.6h0.8V450.7h0.8V450.3h0.8V449.7h0.8V450.3h0.8V450.8h0.8V449.8h0.8V449.9h0.8V450.2h0.8V450.6h0.8V450.5h0.8V450.3h0.8V450.6h0.8V450.7h0.8V450.4h0.8V450.6h0.8V450.5h0.8V450.0h0.8V449.9h0.8V449.6h0.8V449.5h0.8V450.3h0.8V450.0h0.8V450.7h0.8V449.8h0.8V449.6h0.8V449.1h0.8V449.3h0.8V449.9h0.8V450.8h0.8V450.8h0.8V450.6h0.8V450.2h0.8V450.5h0.8V450.0h0.8V450.5h0.8V449.9h0.8V450.0h0.8V450.3h0.8V450.3h0.8V450.5h0.8V448.0h0.8V449.6h0.8V447.5h0.8V447.0h0.8V448.0h0.8V448.5h0.8V449.8h0.8V450.1h0.8V450.7h0.8V450.2h0.8V450.3h0.8V450.8h0.8V450.4h0.8V449.7h0.8V449.2h0.8V449.3h0.8V449.3h0.8V449.2h0.8V450.1h0.8V450.2h0.8V448.8h0.8V448.3h0.8V448.4h0.8V448.6h0.8V450.3h0.8V450.2h0.8V449.1h0.8V446.9h0.8V446.2h0.8V445.9h0.8V445.4h0.8V446.0h0.8V446.5h0.8V445.5h0.8V449.1h0.8V445.9h0.8V447.0h0.8V446.9h0.8V449.4h0.8V449.8h0.8V450.3h0.8V448.6h0.8V447.7h0.8V447.3h0.8V449.0h0.8V449.2h0.8V449.2h0.8V450.0h0.8V450.1h0.8V449.5h0.8V448.8h0.8V448.8h0.8V449.9h0.8V448.9h0.8V450.2h0.8V449.2h0.8V449.0h0.8V448.2h0.8V449.0h0.8V448.0h0.8V448.6h0.8V448.5h0.8V450.3h0.8V450.2h0.8V448.6h0.8V449.0h0.8V449.7h0.8V450.1h0.8V449.8h0.8V450.0h0.8V449.5h0.8V448.3h0.8V448.7h0.8V448.8h0.8V450.2h0.8V448.7h0.8V449.2h0.8V449.9h0.8V450.5h0.8V450.2h0.8V450.3h0.8V447.3h0.8V446.3h0.8V446.1h0.8V445.9h0.8V449.2h0.8V446.3h0.8V446.0h0.8V446.6h0.8V449.7h0.8V448.3h0.8V448.4h0.8V448.5h0.8V449.0h0.8V449.4h0.8V449.8h0.8V450.7h0.8V450.0h0.8V450.8h0.8V450.5h0.8V450.8h0.8V450.8h0.8V450.5h0.8V450.6h0.8V450.8h0.8V450.7h0.8V450.8h0.8V450.8h0.8V450.6h0.8V449.7h0.8V449.1h0.8V450.2h0.8V450.2h0.8V450.7h0.8V450.8h0.8V450.8h0.8V451.2V451.7h-0.8V452.1h-0.8V451.8h-0.8V452.1h-0.8V453.0h-0.8V453.1h-0.8V452.6h-0.8V452.1h-0.8V451.6h-0.8V451.8h-0.8V451.8h-0.8V451.8h-0.8V451.6h-0.8V451.8h-0.8V452.1h-0.8V452.2h-0.8V452.4h-0.8V452.5h-0.8V452.4h-0.8V452.7h-0.8V452.9h-0.8V451.9h-0.8V453.8h-0.8V452.5h-0.8V452.4h-0.8V453.6h-0.8V455.4h-0.8V454.5h-0.8V454.6h-0.8V453.4h-0.8V456.4h-0.8V454.2h-0.8V456.8h-0.8V455.0h-0.8V454.4h-0.8V453.4h-0.8V452.3h-0.8V452.8h-0.8V453.0h-0.8V452.5h-0.8V453.7h-0.8V453.6h-0.8V453.6h-0.8V452.8h-0.8V453.0h-0.8V453.9h-0.8V452.3h-0.8V453.4h-0.8V453.4h-0.8V453.9h-0.8V453.4h-0.8V453.7h-0.8V454.0h-0.8V454.5h-0.8V454.4h-0.8V454.4h-0.8V452.6h-0.8V454.1h-0.8V453.1h-0.8V454.6h-0.8V452.9h-0.8V454.3h-0.8V453.4h-0.8V453.7h-0.8V453.7h-0.8V453.5h-0.8V453.6h-0.8V452.5h-0.8V454.5h-0.8V454.2h-0.8V452.5h-0.8V454.6h-0.8V453.1h-0.8V455.1h-0.8V452.4h-0.8V453.7h-0.8V452.9h-0.8V454.4h-0.8V454.0h-0.8V454.3h-0.8V455.2h-0.8V453.6h-0.8V454.6h-0.8V456.3h-0.8V452.9h-0.8V455.6h-0.8V455.7h-0.8V456.0h-0.8V456.1h-0.8V453.5h-0.8V453.5h-0.8V452.1h-0.8V453.8h-0.8V453.6h-0.8V453.9h-0.8V454.1h-0.8V453.6h-0.8V454.2h-0.8V452.7h-0.8V454.8h-0.8V454.7h-0.8V454.8h-0.8V453.6h-0.8V451.9h-0.8V452.0h-0.8V451.7h-0.8V451.6h-0.8V451.9h-0.8V452.6h-0.8V453.5h-0.8V454.3h-0.8V454.7h-0.8V454.7h-0.8V455.0h-0.8V454.3h-0.8V452.9h-0.8V452.8h-0.8V452.0h-0.8V452.0h-0.8V452.4h-0.8V452.6h-0.8V452.4h-0.8V451.9h-0.8V451.7h-0.8V451.6h-0.8V451.6h-0.8V451.6h-0.8V451.6h-0.8V451.9h-0.8V452.7h-0.8V452.5h-0.8V452.9h-0.8V452.3h-0.8V452.0h-0.8V452.2h-0.8V452.5h-0.8V452.2h-0.8V452.5h-0.8V452.8h-0.8V452.0h-0.8V452.0h-0.8V451.6h-0.8V451.9h-0.8V451.6h-0.8V452.1h-0.8V452.0h-0.8V451.6h-0.8V451.9h-0.8V452.3h-0.8V452.3h-0.8V452.6h-0.8V452.1h-0.8V452.1h-0.8V452.2h-0.8V452.7h-0.8V452.6h-0.8V452.4h-0.8V452.8h-0.8V452.4h-0.8V452.2h-0.8V452.0h-0.8V452.4h-0.8V452.7h-0.8V452.7h-0.8V453.0h-0.8V453.0h-0.8V453.0h-0.8V452.9h-0.8V451.8h-0.8V451.8h-0.8V452.7h-0.8V452.4h-0.8V452.4h-0.8V452.1h-0.8V452.7h-0.8V452.6h-0.8V452.5h-0.8V452.3h-0.8V452.2h-0.8V452.4h-0.8V452.5h-0.8V452.4h-0.8V452.1h-0.8V451.9h-0.8V452.1h-0.8V452.7h-0.8V452.2h-0.8V452.0h-0.8V453.0h-0.8V452.8h-0.8V453.0h-0.8V453.1h-0.8V452.7h-0.8V453.2h-0.8V452.0h-0.8V453.0h-0.8V453.3h-0.8V452.4h-0.8V452.4h-0.8V452.9h-0.8V452.9h-0.8V452.8h-0.8V452.1h-0.8V452.7h-0.8V451.9h-0.8V452.9h-0.8V452.7h-0.8V452.5h-0.8V452.8h-0.8V452.7h-0.8V452.6h-0.8V452.4h-0.8V452.6h-0.8V452.3h-0.8V451.7h-0.8V451.7h-0.8V452.2h-0.8V452.0h-0.8V451.9h-0.8V452.1h-0.8V452.2h-0.8V452.7h-0.8V452.8h-0.8V452.1h-0.8V452.7h-0.8V452.3h-0.8V453.1h-0.8V452.9h-0.8V452.1h-0.8V452.5h-0.8V453.3h-0.8V453.2h-0.8V453.5h-0.8V451.9h-0.8V453.1h-0.8V452.1h-0.8V452.2h-0.8V452.5h-0.8V453.3h-0.8V453.0h-0.8V453.0h-0.8V452.8h-0.8V452.8h-0.8V451.8h-0.8V452.8h-0.8V452.9h-0.8V452.1h-0.8V452.1h-0.8V452.6h-0.8V451.8h-0.8V452.3h-0.8V452.1h-0.8V451.6h-0.8V452.4h-0.8V452.6h-0.8V451.9h-0.8V451.9h-0.8V452.9h-0.8V452.1h-0.8V452.1h-0.8V452.8h-0.8V453.3h-0.8V451.9h-0.8V452.2h-0.8V452.6h-0.8V452.2h-0.8V453.6h-0.8V452.7h-0.8V453.4h-0.8V453.9h-0.8V452.5h-0.8V453.5h-0.8V452.9h-0.8V452.9h-0.8V452.9h-0.8V453.9h-0.8V453.9h-0.8V453.3h-0.8V452.7h-0.8V452.4h-0.8V452.6h-0.8V452.5h-0.8V452.6h-0.8V452.3h-0.8V453.2h-0.8V453.0h-0.8V452.4h-0.8V452.3h-0.8V452.6h-0.8V451.8h-0.8V452.5h-0.8V451.7h-0.8V451.9h-0.8V451.7h-0.8V451.8h-0.8V452.9h-0.8V453.0h-0.8V453.0h-0.8V453.4h-0.8V453.6h-0.8V453.7h-0.8V453.4h-0.8V453.6h-0.8V453.6h-0.8V453.0h-0.8V453.0h-0.8V451.7h-0.8V451.2Z" fill="#6b7484" stroke="#40464e" stroke-width="0.55" stroke-linejoin="round"/>
<path d="M197.5,476.4V475.9h0.8V475.4h0.8V474.4h0.8V474.7h0.8V474.3h0.8V475.4h0.8V475.5h0.8V474.9h0.8V475.3h0.8V474.2h0.8V474.3h0.8V474.4h0.8V474.7h0.8V474.5h0.8V474.7h0.8V474.8h0.8V474.8h0.8V475.3h0.8V475.3h0.8V474.6h0.8V474.6h0.8V475.4h0.8V475.4h0.8V474.2h0.8V474.2h0.8V474.1h0.8V475.0h0.8V474.4h0.8V474.4h0.8V474.9h0.8V474.3h0.8V473.9h0.8V474.9h0.8V475.5h0.8V474.1h0.8V473.8h0.8V473.7h0.8V474.0h0.8V474.2h0.8V474.1h0.8V473.9h0.8V474.5h0.8V474.6h0.8V474.5h0.8V475.5h0.8V474.9h0.8V474.6h0.8V474.9h0.8V475.3h0.8V475.4h0.8V474.8h0.8V475.2h0.8V475.2h0.8V475.1h0.8V475.7h0.8V475.1h0.8V475.2h0.8V475.2h0.8V474.9h0.8V474.8h0.8V475.0h0.8V475.3h0.8V474.6h0.8V475.3h0.8V475.3h0.8V474.9h0.8V475.4h0.8V474.5h0.8V474.2h0.8V474.6h0.8V475.6h0.8V474.2h0.8V475.7h0.8V474.4h0.8V474.5h0.8V475.3h0.8V474.4h0.8V475.4h0.8V474.5h0.8V474.4h0.8V475.6h0.8V475.3h0.8V475.4h0.8V474.8h0.8V475.0h0.8V475.5h0.8V474.8h0.8V475.9h0.8V475.3h0.8V475.9h0.8V475.2h0.8V475.9h0.8V475.5h0.8V475.6h0.8V474.9h0.8V475.9h0.8V475.7h0.8V475.7h0.8V475.0h0.8V475.9h0.8V475.5h0.8V475.0h0.8V474.8h0.8V475.6h0.8V475.7h0.8V475.3h0.8V475.5h0.8V475.3h0.8V474.4h0.8V474.4h0.8V474.7h0.8V474.6h0.8V474.8h0.8V475.1h0.8V475.6h0.8V474.9h0.8V475.5h0.8V474.6h0.8V475.5h0.8V474.7h0.8V475.2h0.8V475.1h0.8V475.4h0.8V476.0h0.8V475.8h0.8V475.0h0.8V475.3h0.8V475.1h0.8V475.3h0.8V476.0h0.8V475.1h0.8V475.1h0.8V475.7h0.8V475.7h0.8V475.2h0.8V474.8h0.8V474.9h0.8V475.1h0.8V475.8h0.8V474.8h0.8V475.7h0.8V474.7h0.8V474.9h0.8V474.6h0.8V474.4h0.8V474.7h0.8V474.7h0.8V475.3h0.8V474.6h0.8V475.3h0.8V475.6h0.8V475.9h0.8V475.1h0.8V475.0h0.8V474.9h0.8V475.1h0.8V475.1h0.8V475.8h0.8V475.7h0.8V475.5h0.8V475.3h0.8V476.0h0.8V475.5h0.8V475.6h0.8V475.8h0.8V476.0h0.8V476.0h0.8V475.5h0.8V475.8h0.8V475.4h0.8V475.5h0.8V475.1h0.8V475.4h0.8V475.6h0.8V475.2h0.8V475.4h0.8V474.4h0.8V475.3h0.8V475.1h0.8V475.4h0.8V475.5h0.8V475.8h0.8V475.5h0.8V475.5h0.8V475.2h0.8V475.1h0.8V475.6h0.8V475.4h0.8V475.6h0.8V476.0h0.8V474.8h0.8V472.6h0.8V472.1h0.8V472.7h0.8V472.2h0.8V472.6h0.8V472.9h0.8V473.8h0.8V474.4h0.8V475.2h0.8V475.2h0.8V475.3h0.8V475.7h0.8V475.6h0.8V473.6h0.8V473.9h0.8V475.1h0.8V472.6h0.8V473.8h0.8V473.5h0.8V474.9h0.8V473.8h0.8V473.6h0.8V475.1h0.8V475.3h0.8V474.4h0.8V474.4h0.8V474.4h0.8V472.1h0.8V471.1h0.8V471.9h0.8V473.8h0.8V471.0h0.8V474.5h0.8V471.6h0.8V471.4h0.8V473.8h0.8V472.3h0.8V471.8h0.8V474.1h0.8V475.6h0.8V475.5h0.8V474.8h0.8V472.3h0.8V474.9h0.8V473.1h0.8V475.2h0.8V472.9h0.8V475.0h0.8V474.6h0.8V473.4h0.8V475.4h0.8V475.1h0.8V473.8h0.8V475.2h0.8V475.1h0.8V473.2h0.8V473.6h0.8V474.8h0.8V474.7h0.8V473.0h0.8V473.6h0.8V473.4h0.8V473.3h0.8V473.5h0.8V475.2h0.8V474.7h0.8V475.4h0.8V474.3h0.8V474.2h0.8V473.9h0.8V473.5h0.8V474.1h0.8V473.8h0.8V475.3h0.8V473.9h0.8V475.5h0.8V474.1h0.8V474.7h0.8V474.8h0.8V474.7h0.8V474.7h0.8V474.0h0.8V470.5h0.8V471.1h0.8V471.0h0.8V473.6h0.8V473.8h0.8V471.0h0.8V474.8h0.8V475.1h0.8V474.7h0.8V474.6h0.8V474.9h0.8V474.1h0.8V475.5h0.8V474.6h0.8V474.8h0.8V475.2h0.8V475.4h0.8V475.9h0.8V476.0h0.8V475.5h0.8V475.7h0.8V475.7h0.8V475.8h0.8V475.8h0.8V475.8h0.8V476.0h0.8V475.4h0.8V474.9h0.8V474.8h0.8V475.0h0.8V475.1h0.8V476.0h0.8V475.3h0.8V476.0h0.8V476.4V476.8h-0.8V477.2h-0.8V477.0h-0.8V476.9h-0.8V477.2h-0.8V478.0h-0.8V477.8h-0.8V477.3h-0.8V476.8h-0.8V476.9h-0.8V476.9h-0.8V476.8h-0.8V477.0h-0.8V476.8h-0.8V477.1h-0.8V477.0h-0.8V477.4h-0.8V477.5h-0.8V477.7h-0.8V477.9h-0.8V478.2h-0.8V477.3h-0.8V478.4h-0.8V478.9h-0.8V479.3h-0.8V479.6h-0.8V478.7h-0.8V481.6h-0.8V481.7h-0.8V479.3h-0.8V481.7h-0.8V482.4h-0.8V482.8h-0.8V482.6h-0.8V477.9h-0.8V478.2h-0.8V477.0h-0.8V478.1h-0.8V478.1h-0.8V477.1h-0.8V478.9h-0.8V479.0h-0.8V479.2h-0.8V477.7h-0.8V477.9h-0.8V479.4h-0.8V478.9h-0.8V478.9h-0.8V479.1h-0.8V478.8h-0.8V479.1h-0.8V478.1h-0.8V477.4h-0.8V479.6h-0.8V479.3h-0.8V478.0h-0.8V479.9h-0.8V479.9h-0.8V479.3h-0.8V479.7h-0.8V478.4h-0.8V479.1h-0.8V478.7h-0.8V477.4h-0.8V479.2h-0.8V477.7h-0.8V479.2h-0.8V477.5h-0.8V477.6h-0.8V478.5h-0.8V479.4h-0.8V479.4h-0.8V478.1h-0.8V478.4h-0.8V479.7h-0.8V477.3h-0.8V478.2h-0.8V477.6h-0.8V480.6h-0.8V481.4h-0.8V479.4h-0.8V481.0h-0.8V480.9h-0.8V478.4h-0.8V478.6h-0.8V480.9h-0.8V479.4h-0.8V481.6h-0.8V481.3h-0.8V477.7h-0.8V477.4h-0.8V478.8h-0.8V478.8h-0.8V478.5h-0.8V478.8h-0.8V479.4h-0.8V477.5h-0.8V479.1h-0.8V479.1h-0.8V479.7h-0.8V480.2h-0.8V480.0h-0.8V479.4h-0.8V477.3h-0.8V477.0h-0.8V477.4h-0.8V477.6h-0.8V477.7h-0.8V477.4h-0.8V478.6h-0.8V477.7h-0.8V478.0h-0.8V478.0h-0.8V481.1h-0.8V480.9h-0.8V479.6h-0.8V477.2h-0.8V477.0h-0.8V477.5h-0.8V477.6h-0.8V477.2h-0.8V477.7h-0.8V477.3h-0.8V476.9h-0.8V477.0h-0.8V477.2h-0.8V476.9h-0.8V476.8h-0.8V477.6h-0.8V478.2h-0.8V478.5h-0.8V478.6h-0.8V477.2h-0.8V476.8h-0.8V477.5h-0.8V477.8h-0.8V478.1h-0.8V477.4h-0.8V477.3h-0.8V477.6h-0.8V477.1h-0.8V477.1h-0.8V477.1h-0.8V477.3h-0.8V477.3h-0.8V477.2h-0.8V477.4h-0.8V477.0h-0.8V477.4h-0.8V476.9h-0.8V477.5h-0.8V477.3h-0.8V477.6h-0.8V477.0h-0.8V477.5h-0.8V478.0h-0.8V477.0h-0.8V478.0h-0.8V478.0h-0.8V478.4h-0.8V478.0h-0.8V477.5h-0.8V478.0h-0.8V478.0h-0.8V478.0h-0.8V477.3h-0.8V477.5h-0.8V477.9h-0.8V477.0h-0.8V477.8h-0.8V477.9h-0.8V477.8h-0.8V477.6h-0.8V477.9h-0.8V476.9h-0.8V477.3h-0.8V477.5h-0.8V477.3h-0.8V477.0h-0.8V477.7h-0.8V477.8h-0.8V477.8h-0.8V477.5h-0.8V477.7h-0.8V477.2h-0.8V477.3h-0.8V477.7h-0.8V478.1h-0.8V478.0h-0.8V477.3h-0.8V477.4h-0.8V478.0h-0.8V478.0h-0.8V478.2h-0.8V477.2h-0.8V478.4h-0.8V478.3h-0.8V478.2h-0.8V477.7h-0.8V477.1h-0.8V478.4h-0.8V477.3h-0.8V477.4h-0.8V477.1h-0.8V477.8h-0.8V477.0h-0.8V478.1h-0.8V477.9h-0.8V478.0h-0.8V477.9h-0.8V476.9h-0.8V476.8h-0.8V477.5h-0.8V477.8h-0.8V477.6h-0.8V477.7h-0.8V476.9h-0.8V477.1h-0.8V477.0h-0.8V476.9h-0.8V477.7h-0.8V477.9h-0.8V476.9h-0.8V478.1h-0.8V478.1h-0.8V477.5h-0.8V478.0h-0.8V477.6h-0.8V478.3h-0.8V478.4h-0.8V478.5h-0.8V478.1h-0.8V477.7h-0.8V477.6h-0.8V478.7h-0.8V478.5h-0.8V478.2h-0.8V477.8h-0.8V478.2h-0.8V477.7h-0.8V478.0h-0.8V477.9h-0.8V478.3h-0.8V477.8h-0.8V477.8h-0.8V478.1h-0.8V477.3h-0.8V477.7h-0.8V477.7h-0.8V477.9h-0.8V477.9h-0.8V476.9h-0.8V477.5h-0.8V477.6h-0.8V477.6h-0.8V477.3h-0.8V477.8h-0.8V478.0h-0.8V477.9h-0.8V478.1h-0.8V477.2h-0.8V477.5h-0.8V478.5h-0.8V478.3h-0.8V477.9h-0.8V478.3h-0.8V478.9h-0.8V478.7h-0.8V478.5h-0.8V477.5h-0.8V478.7h-0.8V478.3h-0.8V478.0h-0.8V477.7h-0.8V479.2h-0.8V477.9h-0.8V478.1h-0.8V478.5h-0.8V478.5h-0.8V478.6h-0.8V478.6h-0.8V478.2h-0.8V477.8h-0.8V478.0h-0.8V477.7h-0.8V477.1h-0.8V478.4h-0.8V478.1h-0.8V477.9h-0.8V477.9h-0.8V477.0h-0.8V477.1h-0.8V477.8h-0.8V478.1h-0.8V477.5h-0.8V477.1h-0.8V478.3h-0.8V478.1h-0.8V477.7h-0.8V478.6h-0.8V478.6h-0.8V478.4h-0.8V478.4h-0.8V478.7h-0.8V478.6h-0.8V478.2h-0.8V477.2h-0.8V476.4Z" fill="#6b7484" stroke="#40464e" stroke-width="0.55" stroke-linejoin="round"/>
</svg>
<div class="a" style="left:270px;top:438.5px;width:101px;height:63px;background:rgba(220,231,197,0.55);border:1px solid #c6d0b4"></div>
<div class="a" style="left:366px;top:438.5px;width:5px;height:4.5px;background:#7c8088"></div>

<!-- below tracks -->
<div class="a" style="left:60px;top:501.5px;width:662.6px;height:34px;background:#4b4b57"></div>
<div class="a" style="left:0;top:501px;width:59px;height:34px;background:#595967"></div>

<!-- left track headers -->
<div class="a" style="left:0;top:111px;width:59px;height:50px;background:#595967"></div>
<div class="a" style="left:-4.2px;top:130.5px;font-size:9px;line-height:11px;color:#c2c2ca">ucle/punch</div>
<div class="a" style="left:-5.4px;top:140.5px;font-size:9px;line-height:11px;color:#c2c2ca">Repères</div>
<div class="a" style="left:-7.5px;top:150.5px;font-size:9px;line-height:11px;color:#c2c2ca">ments</div>
<div class="a" style="left:0;top:160.5px;width:59px;height:45px;background:#3b3b49"></div>
<div class="a" style="left:0;top:166px;width:4px;height:10px;background:#0a0a0a"></div>
<div class="a" style="left:0;top:180px;width:7px;height:11px;background:#565664;border-radius:0 2px 2px 0"></div>
<div class="a" style="left:0;top:205px;width:59px;height:233px;background:#2e2e3a;border-top:1px solid #4a4a58"></div>
<div class="a" style="left:0;top:211.7px;width:3.6px;height:9px;background:#070707"></div>
<div class="a" style="left:7px;top:210px;width:2.5px;height:9px;background:#5a5a68"></div>
<div class="a" style="left:0;top:221.6px;width:6.5px;height:11px;background:#50505e;border-radius:0 2px 2px 0"></div>
<div class="a" style="left:7px;top:221px;width:2.5px;height:17px;background:#5a5a68"></div>
<div class="a" style="left:0;top:438px;width:53.4px;height:62.7px;background:#504f8b"></div>
<div class="a" style="left:53.4px;top:438px;width:1.7px;height:62.7px;background:#000"></div>
<div class="a" style="left:55.1px;top:438px;width:0.6px;height:62.7px;background:#504f8b"></div>
<div class="a" style="left:55.7px;top:438px;width:1.8px;height:62.7px;background:#000"></div>
<div class="a" style="left:57.5px;top:438px;width:1.5px;height:62.7px;background:#5a5a78"></div>
<div class="a" style="left:0;top:442.7px;width:4px;height:11.6px;background:#070707"></div>
<div class="a" style="left:6.5px;top:442px;width:3px;height:14px;background:#5c5c6a;border:0.5px solid #3c3c58"></div>
<div class="a" style="left:6.5px;top:457.6px;width:3px;height:13px;background:#5c5c6a;border:0.5px solid #3c3c58"></div>
<div class="a" style="left:0;top:459px;width:6px;height:9.3px;background:#55556c;border-radius:0 2px 2px 0"></div>

<!-- playhead -->
<div class="a" style="left:59.1px;top:102px;width:0.9px;height:433px;background:#cc1616"></div>
<svg class="a" style="left:59px;top:528px" width="7" height="7" viewBox="0 0 7 7"><path d="M0,0 L0,7 L6.5,7 Z" fill="#f00808"/></svg>

<!-- bottom bar -->
<div class="a" style="left:0;top:535px;width:60px;height:21px;background:#595967"></div>
<div class="btn" style="left:-3px;top:535px;width:12px;height:20px"></div>
<svg class="a" style="left:0px;top:540.5px" width="6" height="9" viewBox="0 0 6 9"><path d="M2.6,0.6 L4.8,3.6 L0.4,3.6 Z M2.6,8.2 L4.8,5.2 L0.4,5.2 Z" fill="#a4a4ae"/></svg>
<div class="btn" style="left:11px;top:535px;width:14.6px;height:20px"></div>
<div class="btn" style="left:27.5px;top:535px;width:14.6px;height:20px"></div>
<div class="btn" style="left:43.8px;top:535px;width:14.6px;height:20px"></div>
<svg class="a" style="left:14px;top:540px" width="10" height="10" viewBox="0 0 10 10"><path d="M5.8,5.6 L8.4,8.1" stroke="#c8c8c8" stroke-width="1.5" stroke-linecap="round"/><path d="M5.8,5.6 L8.4,8.1" stroke="#444" stroke-width="0.6"/><circle cx="4.1" cy="3.9" r="2.5" fill="#f4f4f4"/><path d="M2.9,3.9 L5.3,3.9" stroke="#333" stroke-width="0.9"/></svg>
<svg class="a" style="left:30px;top:540px" width="10" height="10" viewBox="0 0 10 10"><path d="M5.8,5.6 L8.4,8.1" stroke="#c8c8c8" stroke-width="1.5" stroke-linecap="round"/><path d="M5.8,5.6 L8.4,8.1" stroke="#444" stroke-width="0.6"/><circle cx="4.1" cy="3.9" r="2.5" fill="#f4f4f4"/><path d="M2.9,3.9 L5.3,3.9 M4.1,2.7 L4.1,5.1" stroke="#333" stroke-width="0.9"/></svg>
<svg class="a" style="left:46.5px;top:540px" width="10" height="10" viewBox="0 0 10 10"><path d="M5.8,5.6 L8.4,8.1" stroke="#c8c8c8" stroke-width="1.5" stroke-linecap="round"/><path d="M5.8,5.6 L8.4,8.1" stroke="#444" stroke-width="0.6"/><circle cx="4.1" cy="3.9" r="2.5" fill="#f4f4f4"/><path d="M2.9,2.8 L5.3,2.8 M2.9,5 L5.3,5 M4.1,2.8 L4.1,5" stroke="#333" stroke-width="0.8"/></svg>
<div class="a" style="left:59.8px;top:535px;width:662.8px;height:21px;background:#878787;border-top:1px solid #707070"></div>
<div class="a" style="left:61.2px;top:537px;width:7px;height:15.7px;background:#2c2c3e;border-radius:1px"></div>
<svg class="a" style="left:61.8px;top:540.5px" width="6" height="9" viewBox="0 0 6 9"><path d="M4.7,0.9 L1.5,4.4 L4.7,7.9" stroke="#f4f4f4" stroke-width="1.4" fill="none"/></svg>
<div class="a" style="left:68.5px;top:537px;width:26px;height:16.6px;background:linear-gradient(#bcbcbc,#a2a2a2);border:1px solid #929292;border-top-color:#c8c8c8;border-left-color:#c0c0c0;border-radius:1.5px"></div>
<div class="a" style="left:78.6px;top:543px;width:0.9px;height:4.4px;background:#7a7a7a"></div>
<div class="a" style="left:80.9px;top:543px;width:0.9px;height:4.4px;background:#7a7a7a"></div>
<div class="a" style="left:83.1px;top:543px;width:0.9px;height:4.4px;background:#7a7a7a"></div>
<div class="a" style="left:712.5px;top:536.5px;width:9px;height:17px;background:linear-gradient(#b4b4b4,#9c9c9c);border:1px solid #9a9a9a;border-radius:1px"></div>
<svg class="a" style="left:714.5px;top:541px" width="6" height="9" viewBox="0 0 6 9"><path d="M1.5,1 L4.5,4.5 L1.5,8" stroke="#e8e8e8" stroke-width="1.2" fill="none"/></svg>

<!-- right: region list -->
<div class="a" style="left:722.5px;top:102px;width:4.5px;height:454px;background:#595967"></div>
<div class="a" style="left:727px;top:102px;width:53.5px;height:452.5px;background:#000"></div>
<div class="a" style="left:727px;top:102px;width:53.5px;height:200px;overflow:hidden">
</div>
<div class="li w" style="top:104.5px;width:38.2px;overflow:hidden">one-L.1@</div>
<div class="li" style="top:118.5px;width:38.2px;overflow:hidden">one-L_@</div>
<div class="li w" style="top:132.5px;width:38.2px;overflow:hidden">one-L.1@</div>
<div class="li" style="top:145.5px;width:38.2px;overflow:hidden">one-L_@</div>
<div class="li" style="top:159.5px;width:38.2px;overflow:hidden">one-L [2]</div>
<div class="li" style="top:173.5px;width:38.2px;overflow:hidden">one-R</div>
<div class="li" style="top:187.5px;width:38.2px;overflow:hidden">one-L</div>
<svg class="a" style="left:730px;top:160px" width="6" height="9" viewBox="0 0 6 9"><path d="M0.9,1.2 L4.6,4.3 L0.9,7.4 Z" fill="none" stroke="#9a9a9a" stroke-width="1"/></svg>

<!-- right: tabs -->
<div class="a" style="left:780.5px;top:38px;width:19.5px;height:518px;background:#595967"></div>
<div class="tab" style="top:102px;height:40px;background:#6b6b79"><span>Régions</span></div>
<div class="tab" style="top:143.5px;height:52.5px"><span>Pistes/bus</span></div>
<div class="tab" style="top:197.5px;height:38px"><span>Clichés</span></div>
<div class="tab" style="top:237px;height:84px"><span>Groupes d'édition</span></div>
<div class="tab" style="top:322.5px;height:51px"><span>Fragments</span></div>
<div class="a" style="left:797.2px;top:0;width:2.8px;height:556px;background:#020202"></div>

<!-- popup menu -->
<div class="a" style="left:9.5px;top:36.5px;width:321.5px;height:441.8px;background:#595967;border:1px solid #3c3c48;border-right-color:#4e4e5b;border-bottom-color:#4e4e5b;box-shadow:inset 1px 1px 0 #686876"></div>
<div class="a" id="menu" style="left:0;top:0;width:800px;height:556px">
<div class="mi" style="top:38px">Insérer une région depuis la liste</div><div class="ac" style="top:38px">I</div>
<div class="sep" style="top:55px"></div>
<div class="mi d" style="top:61px">Renommer</div>
<div class="mi d" style="top:76px">Monter la région</div>
<div class="mi d" style="top:91px">Descendre la région</div>
<div class="mi" style="top:106px">Déplacer à sa position d'origine</div><div class="ac" style="top:106px">Ctrl+Alt+O</div>
<div class="mi d" style="top:121px">Verrouiller la région</div>
<div class="mi" style="top:136px">Placer le point de  synchronisation de la région</div><div class="ac" style="top:136px">V</div>
<div class="mi d" style="top:151px">Supprimer le point de synchronisation de la région</div>
<div class="mi" style="top:166px">Rendre muet/audible région</div><div class="ac" style="top:166px">Ctrl+M</div>
<div class="sep" style="top:184px"></div>
<div class="mi" style="top:189px">Inverser</div><div class="ac" style="top:189px">Alt+R</div>
<div class="mi d" style="top:205px">Créer des régions mono</div>
<div class="mi" style="top:219px">Normaliser la région</div><div class="ac" style="top:219px">N</div>
<div class="mi" style="top:234px">Augmenter le gain de la région</div><div class="ac" style="top:234px">^</div>
<div class="mi" style="top:249px">Diminuer le gain de la région</div><div class="ac" style="top:249px">&amp;</div>
<div class="a hl" style="left:11.5px;top:265px;width:318px;height:14.5px"></div>
<div class="mi h" style="top:265px">Transposer</div><div class="ac h" style="top:265px">Alt+T</div>
<div class="mi d" style="top:280px">Commuter opacité</div>
<div class="mi" style="top:295px">Commuter le fondu d'entrée de la région</div>
<div class="mi" style="top:310px">Commuter le fondu de sortie de la région</div>
<div class="mi" style="top:325px">Commuter les fondus de région</div>
<div class="sep" style="top:343px"></div>
<div class="mi" style="top:348px">Dupliquer la région</div><div class="ac" style="top:348px">D</div>
<div class="mi" style="top:363px">Multi-dupliquer la région</div><div class="ac" style="top:363px">Maj+D</div>
<div class="mi d" style="top:378px">Remplir la piste</div>
<div class="sep" style="top:396.5px"></div>
<div class="mi d" style="top:402px">Boucler sur la région</div>
<div class="mi" style="top:416px">Définir la boucle depuis la région</div><div class="ac" style="top:416px">Alt+]</div>
<div class="mi" style="top:431px">Définir le « punch » depuis la région</div><div class="ac" style="top:431px">Alt+[</div>
<div class="mi d" style="top:447px">Ajouter un repère de plage</div>
<div class="mi d" style="top:462px">Ajouter repère(s) de plage</div>
</div>
<!-- mouse cursor -->
<svg class="a" style="left:89.8px;top:270.2px" width="10" height="14" viewBox="0 0 10 14"><path d="M1,1 L1,11 L3.5,8.8 L5.2,12.6 L6.8,11.9 L5.1,8.2 L8.4,8.2 Z" fill="#151515" stroke="#f4f4f4" stroke-width="0.9"/></svg>
</div>
</body></html>
